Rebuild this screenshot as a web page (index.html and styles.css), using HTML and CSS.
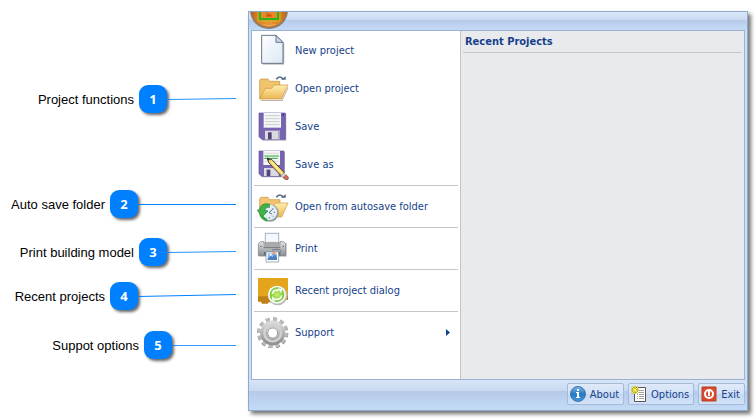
FILE: index.html
```html
<!DOCTYPE html>
<html lang="en">
<head>
    <meta charset="UTF-8">
    <meta name="viewport" content="width=device-width, initial-scale=1.0">
    <title>Application menu</title>
    <link rel="stylesheet" href="styles.css">
</head>
<body>
    <div class="page">
        <aside class="callouts">
            <div class="callout callout-project">
                <span>Project functions</span>
                <b class="badge">1</b>
                <svg class="line line-medium" viewBox="0 0 100 4" preserveAspectRatio="none"><path d="M0 2.5L100 1.5"/></svg>
            </div>
            <div class="callout callout-autosave">
                <span>Auto save folder</span>
                <b class="badge">2</b>
                <svg class="line line-long" viewBox="0 0 100 4" preserveAspectRatio="none"><path d="M0 2.5H100"/></svg>
            </div>
            <div class="callout callout-print">
                <span>Print building model</span>
                <b class="badge">3</b>
                <svg class="line line-medium" viewBox="0 0 100 4" preserveAspectRatio="none"><path d="M0 2.5L100 1.5"/></svg>
            </div>
            <div class="callout callout-recent">
                <span>Recent projects</span>
                <b class="badge">4</b>
                <svg class="line line-long" viewBox="0 0 100 4" preserveAspectRatio="none"><path d="M0 2.5L100 0.5"/></svg>
            </div>
            <div class="callout callout-support">
                <span>Suppot options</span>
                <b class="badge">5</b>
                <svg class="line line-short" viewBox="0 0 100 4" preserveAspectRatio="none"><path d="M0 2.5H100"/></svg>
            </div>
        </aside>

        <main class="window">
            <header class="titlebar">
                <svg class="orb" viewBox="0 0 40 17">
                    <defs>
                        <radialGradient id="orbFill" cx="50%" cy="75%" r="60%">
                            <stop offset="0" stop-color="#f6a13c"/>
                            <stop offset="0.6" stop-color="#d37a20"/>
                            <stop offset="1" stop-color="#9c5a1c"/>
                        </radialGradient>
                    </defs>
                    <circle cx="20" cy="-2" r="19" fill="#8d7a68"/>
                    <circle cx="20" cy="-3" r="18" fill="url(#orbFill)"/>
                    <path d="M7 8Q20 19 33 8Q28 13 20 13T7 8" fill="#ffe0a0"/>
                    <path d="M11 -2V7H29V-2" fill="#e58a24" stroke="#2fae1e" stroke-width="2"/>
                    <path d="M9 -2V9H31V-2" fill="none" stroke="#c4b51e" stroke-width="1"/>
                    <path d="M17 1L22 3L17 4H23" fill="none" stroke="#d04c10"/>
                </svg>
            </header>

            <div class="content">
                <nav class="menu">
                    <button class="menu-item" type="button">
                        <svg class="icon" viewBox="0 0 96 96">
                            <defs>
                                <linearGradient id="paper" x2="1" y2="1"><stop offset="0" stop-color="#fff"/><stop offset="1" stop-color="#dce7f5"/></linearGradient>
                            </defs>
                            <path d="M17 8H60L82 29V92H17Z" fill="#bcc0c6"/>
                            <path d="M14 4H57L78 25V88H14Z" fill="url(#paper)" stroke="#667689" stroke-width="3"/>
                            <path d="M57 4V25H78Z" fill="#c4d5eb" stroke="#667689" stroke-width="3"/>
                        </svg>
                        New project
                    </button>
                    <button class="menu-item" type="button">
                        <svg class="icon" viewBox="0 0 96 96">
                            <defs>
                                <linearGradient id="folder" x2="0" y2="1"><stop offset="0" stop-color="#fff0ad"/><stop offset="1" stop-color="#ebb552"/></linearGradient>
                            </defs>
                            <path d="M12 84H74L93 44V50L76 87H14Z" fill="#bbb4a8"/>
                            <path d="M8 80V25L11 21H33L37 28H68V41L18 80Z" fill="#f0c46c" stroke="#c58c39" stroke-width="2"/>
                            <path d="M8 81L25 49H44L51 39H93L73 81Z" fill="url(#folder)" stroke="#cc933d" stroke-width="2"/>
                            <path d="M58 22Q68 8 79 22" fill="none" stroke="#506985" stroke-width="5"/>
                            <path d="M72 23H86V13Z" fill="#506985"/>
                        </svg>
                        Open project
                    </button>
                    <button class="menu-item" type="button">
                        <svg class="icon" viewBox="0 0 96 96">
                            <path d="M9 12H88V92H16Z" fill="#b8b5c2"/>
                            <path d="M6 9H85V88H14L6 80Z" fill="#7964b3" stroke="#65529d" stroke-width="2"/>
                            <path d="M20 9H72V53H20Z" fill="#f6f7f7"/>
                            <path d="M24 17H68M24 26H68M24 35H68M24 44H68" stroke="#c9cdce" stroke-width="3"/>
                            <path d="M24 62H69V88H24Z" fill="#d9dbe1"/>
                            <path d="M33 67H44V88H33Z" fill="#514477"/>
                            <path d="M63 62H69V88H63Z" fill="#aaa9bb"/>
                            <path d="M76 12H81V18H76Z" fill="#473879"/>
                        </svg>
                        Save
                    </button>
                    <button class="menu-item" type="button">
                        <svg class="icon" viewBox="0 0 96 96">
                            <path d="M9 12H84V88H14Z" fill="#b8b5c2"/>
                            <path d="M6 9H81V85H14L6 77Z" fill="#7964b3" stroke="#65529d" stroke-width="2"/>
                            <path d="M19 9H69V51H19Z" fill="#f6f7f7"/>
                            <path d="M22 16H66M22 40H66" stroke="#c9cdce" stroke-width="2"/>
                            <path d="M22 24H66M22 31H62" stroke="#29a43a" stroke-width="3"/>
                            <path d="M21 60H65V84H21Z" fill="#d9dbe1"/>
                            <path d="M29 65H40V84H29Z" fill="#514477"/>
                            <path d="M30 30L45 35L82 74L72 83L36 45Z" fill="#f4ce69" stroke="#514638" stroke-width="3"/>
                            <path d="M42 40L77 78" stroke="#fff0a4" stroke-width="4"/>
                            <path d="M30 30L39 33L34 39Z" fill="#262626"/>
                            <path d="M72 83L82 74L87 80L78 89Z" fill="#d7d9d5"/>
                            <path d="M78 89L87 80Q98 88 93 94Q87 98 78 89Z" fill="#d66b59" stroke="#7d4740" stroke-width="2"/>
                        </svg>
                        Save as
                    </button>
                    <hr class="separator">
                    <button class="menu-item" type="button">
                        <svg class="icon" viewBox="0 0 96 96">
                            <path d="M8 75V26L12 22H33L38 29H69V75Z" fill="#f2c573" stroke="#cf8e38" stroke-width="2"/>
                            <path d="M32 80L48 49L56 39H93L74 81Z" fill="url(#folder)" stroke="#d1943f" stroke-width="2"/>
                            <path d="M58 22Q68 8 79 22" fill="none" stroke="#506985" stroke-width="5"/>
                            <path d="M72 23H86V13Z" fill="#506985"/>
                            <circle cx="39" cy="69" r="26" fill="#8e9fa6"/>
                            <circle cx="37" cy="67" r="22" fill="#e3eef5" stroke="#fff" stroke-width="2"/>
                            <path d="M37 50V54M37 81V85M54 67H50M49 55L46 58M49 80L46 77M36 68L49 56M36 68L45 72" stroke="#57798d" stroke-width="3"/>
                            <path d="M37 42Q10 38 8 59L1 60L15 81L33 63L23 61Q25 52 37 50Z" fill="#40b448" stroke="#277e30" stroke-width="2"/>
                            <path d="M7 74Q13 91 31 95L30 86Q21 83 17 75Z" fill="#34a63e"/>
                        </svg>
                        Open from autosave folder
                    </button>
                    <hr class="separator">
                    <button class="menu-item" type="button">
                        <svg class="icon" viewBox="0 0 96 96">
                            <defs>
                                <linearGradient id="metal" x2="0" y2="1"><stop offset="0" stop-color="#e2e3e5"/><stop offset="1" stop-color="#898d92"/></linearGradient>
                            </defs>
                            <path d="M7 33H89V74H7Z" fill="#c1c2c4"/>
                            <path d="M25 4H65V32H25Z" fill="#f3f8fe" stroke="#7c8c9e" stroke-width="2"/>
                            <path d="M10 29H21V35H69V29H80L86 35V71H4V35Z" fill="url(#metal)" stroke="#777b80" stroke-width="2"/>
                            <path d="M20 30H70V47H20Z" fill="#a8abae"/>
                            <path d="M20 47H70M9 43H14M76 43H81" stroke="#73777b" stroke-width="3"/>
                            <path d="M45 54Q62 49 70 54V60" fill="none" stroke="#747b80" stroke-width="3"/>
                            <path d="M21 60H70V70H21Z" fill="#656c73"/>
                            <path d="M27 60H65V90H27Z" fill="#fff" stroke="#7b8998" stroke-width="2"/>
                            <path d="M32 64H60V84H32Z" fill="#8abaf0"/>
                            <path d="M32 80L41 71L47 76L52 67L60 76V84H32Z" fill="#4c80c2"/>
                            <circle cx="41" cy="68" r="3" fill="#fff"/>
                            <circle cx="50" cy="64" r="4" fill="#ef9269"/>
                        </svg>
                        Print
                    </button>
                    <hr class="separator">
                    <button class="menu-item" type="button">
                        <svg class="icon" viewBox="0 0 96 96">
                            <defs>
                                <radialGradient id="refresh"><stop offset="0" stop-color="#c8ee6b"/><stop offset="1" stop-color="#78c73c"/></radialGradient>
                            </defs>
                            <path d="M3 12H93V78H70V85H35L32 89H15L12 83H3Z" fill="#bf8016"/>
                            <path d="M3 12H93V67H3Z" fill="#e4a51c"/>
                            <circle cx="62" cy="65" r="29" fill="#b9bab6"/>
                            <circle cx="60" cy="62" r="27" fill="#fafcf7"/>
                            <circle cx="60" cy="62" r="22" fill="url(#refresh)"/>
                            <path d="M46 60Q49 45 65 49M74 64Q71 79 55 75" fill="none" stroke="#fff" stroke-width="5"/>
                            <path d="M62 43L75 45L73 58ZM45 66L46 80L58 79Z" fill="#fff"/>
                        </svg>
                        Recent project dialog
                    </button>
                    <hr class="separator">
                    <button class="menu-item" type="button">
                        <svg class="icon" viewBox="0 0 96 96">
                            <defs>
                                <linearGradient id="gear" x2="0" y2="1"><stop offset="0" stop-color="#d8d8d8"/><stop offset="1" stop-color="#929292"/></linearGradient>
                            </defs>
                            <circle cx="47" cy="51" r="39" fill="none" stroke="#949494" stroke-width="16" pathLength="24" stroke-dasharray="1.1 0.9"/>
                            <circle cx="47" cy="50" r="39" fill="none" stroke="#bcbcbc" stroke-width="13" pathLength="24" stroke-dasharray="1 1" stroke-dashoffset="-0.05"/>
                            <circle cx="47" cy="51" r="27" fill="none" stroke="url(#gear)" stroke-width="21"/>
                            <circle cx="47" cy="51" r="25" fill="none" stroke="#d2d2d2" stroke-width="7"/>
                            <circle cx="47" cy="51" r="15" fill="#fff" stroke="#989898" stroke-width="3"/>
                        </svg>
                        Support
                        <svg class="arrow" viewBox="0 0 4 7"><path d="M0 0L4 3.5L0 7Z"/></svg>
                    </button>
                </nav>

                <section class="recent">
                    <h2>Recent Projects</h2>
                </section>
            </div>

            <footer class="footer">
                <button class="action" type="button">
                    <svg class="action-icon" viewBox="0 0 16 16">
                        <defs>
                            <linearGradient id="info" x2="0" y2="1"><stop offset="0" stop-color="#82b5e4"/><stop offset="0.5" stop-color="#2878c3"/><stop offset="1" stop-color="#3e9ce0"/></linearGradient>
                        </defs>
                        <circle cx="8" cy="8" r="7.5" fill="url(#info)" stroke="#3d75ac"/>
                        <path d="M7 3H9V5H7ZM6 6H9V11H10V12H6V11H7V7H6Z" fill="#fff"/>
                    </svg>
                    About
                </button>
                <button class="action" type="button">
                    <svg class="action-icon" viewBox="0 0 16 16">
                        <path d="M3.500 1.500H14.500V15.500H3.500Z" fill="#fff" stroke="#555"/>
                        <path d="M6 4.500H7M8 4.500H13M6 6.500H7M8 6.500H13M6 8.500H7M8 8.500H13M6 10.500H7M8 10.500H13M6 12.500H7M8 12.500H13" stroke="#a2a2a2"/>
                        <path d="M4 0V8M0 4H8M1 1L7 7M7 1L1 7" stroke="#9c951d" stroke-width="2"/>
                        <path d="M4 0V8M0 4H8M1 1L7 7M7 1L1 7" stroke="#fff45b"/>
                    </svg>
                    Options
                </button>
                <button class="action" type="button">
                    <svg class="action-icon" viewBox="0 0 16 16">
                        <path d="M1 1H15V15H1Z" fill="#d94b2a" stroke="#b83c20"/>
                        <circle cx="8" cy="8" r="4" fill="none" stroke="#fff" stroke-width="2"/>
                        <path d="M8 5V10" stroke="#fff" stroke-width="2"/>
                    </svg>
                    Exit
                </button>
            </footer>
        </main>
    </div>
</body>
</html>
```
FILE: styles.css
```css
* {
    box-sizing: border-box;
}

body {
    margin: 0;
    background-color: #ffffff;
    color: #000000;
    font-family: "Liberation Sans", Arial, sans-serif;
    font-size: 13px;
}

.page {
    display: grid;
    grid-template-columns: 248px 1fr;
    min-height: 100vh;
    padding: 11px 8px 8px 0;
}

/* Numbered callouts */
.callouts {
    padding: 74px 12px 0 0;
}

.callout {
    display: flex;
    justify-content: flex-end;
    align-items: center;
}

.callout-autosave {
    margin-top: 77px;
}

.callout-print {
    margin-top: 20px;
}

.callout-recent {
    margin-top: 16px;
}

.callout-support {
    margin-top: 21px;
}

.badge {
    display: flex;
    justify-content: center;
    align-items: center;
    width: 28px;
    height: 28px;
    margin-left: 5px;
    border-radius: 9px;
    background-color: #0080ff;
    box-shadow: 2px 2px 3px rgba(0, 0, 0, 0.6);
    color: #ffffff;
    font-family: "Open Sans", sans-serif;
    font-size: 13px;
}

.line {
    height: 4px;
    fill: none;
    stroke: #0080ff;
    stroke-width: 1;
}

.line-short {
    width: 64px;
}

.line-medium {
    width: 69px;
}

.line-long {
    width: 98px;
}

/* Window */
.window {
    display: flex;
    flex-direction: column;
    padding: 0 2px;
    border: 1px solid #8fa8cf;
    background-color: #cfe0f6;
    box-shadow: 3px 3px 4px rgba(0, 0, 0, 0.55);
    color: #15428b;
    font-family: "DejaVu Sans Condensed", Tahoma, sans-serif;
    font-size: 11px;
}

.titlebar,
.footer {
    margin: 0 -2px;
}

.titlebar {
    height: 18px;
    overflow: hidden;
    background: linear-gradient(#dbe8f8, #c9daf2 8px, #b5cae8 8px, #c4daf5);
}

.orb {
    display: block;
    width: 40px;
    height: 17px;
}

.content {
    display: grid;
    grid-template-columns: 208px 1fr;
    flex: 1;
    border: 1px solid #9ab0d2;
}

.menu {
    background-color: #ffffff;
}

.menu-item {
    display: flex;
    align-items: center;
    gap: 6px;
    width: 100%;
    height: 38px;
    padding: 0 10px 0 5px;
    border: none;
    background: none;
    color: inherit;
    font: inherit;
    text-align: left;
}

.menu-item:hover {
    background-color: #e6effb;
}

.icon {
    width: 32px;
    height: 32px;
}

.arrow {
    width: 4px;
    height: 7px;
    margin-left: auto;
    fill: #15428b;
}

.separator {
    height: 1px;
    margin: 2px 2px 1px;
    border: none;
    background-color: #c5c5c5;
}

.recent {
    padding: 0 2px;
    border-left: 1px solid #c5c5c5;
    background-color: #e9eaee;
}

.recent h2 {
    margin: 0;
    padding: 0 2px;
    border-bottom: 1px solid #c5c5c5;
    font-size: 11px;
    line-height: 21px;
}

.footer {
    display: flex;
    justify-content: flex-end;
    gap: 4px;
    padding: 3px 2px 5px;
    background: linear-gradient(#d7e5f6, #c8d9f0 11px, #b5cae8 11px, #c4dbf7);
}

.action {
    display: flex;
    align-items: center;
    gap: 4px;
    height: 22px;
    padding: 0 4px 0 2px;
    border: 1px solid #a5badb;
    border-radius: 2px;
    background: linear-gradient(#dfeafa, #d2e1f6 50%, #c4d7f1 50%, #d2e3f8);
    color: inherit;
    font: inherit;
}

.action:hover {
    border-color: #7d9bc8;
}

.action-icon {
    width: 16px;
    height: 16px;
}
```
